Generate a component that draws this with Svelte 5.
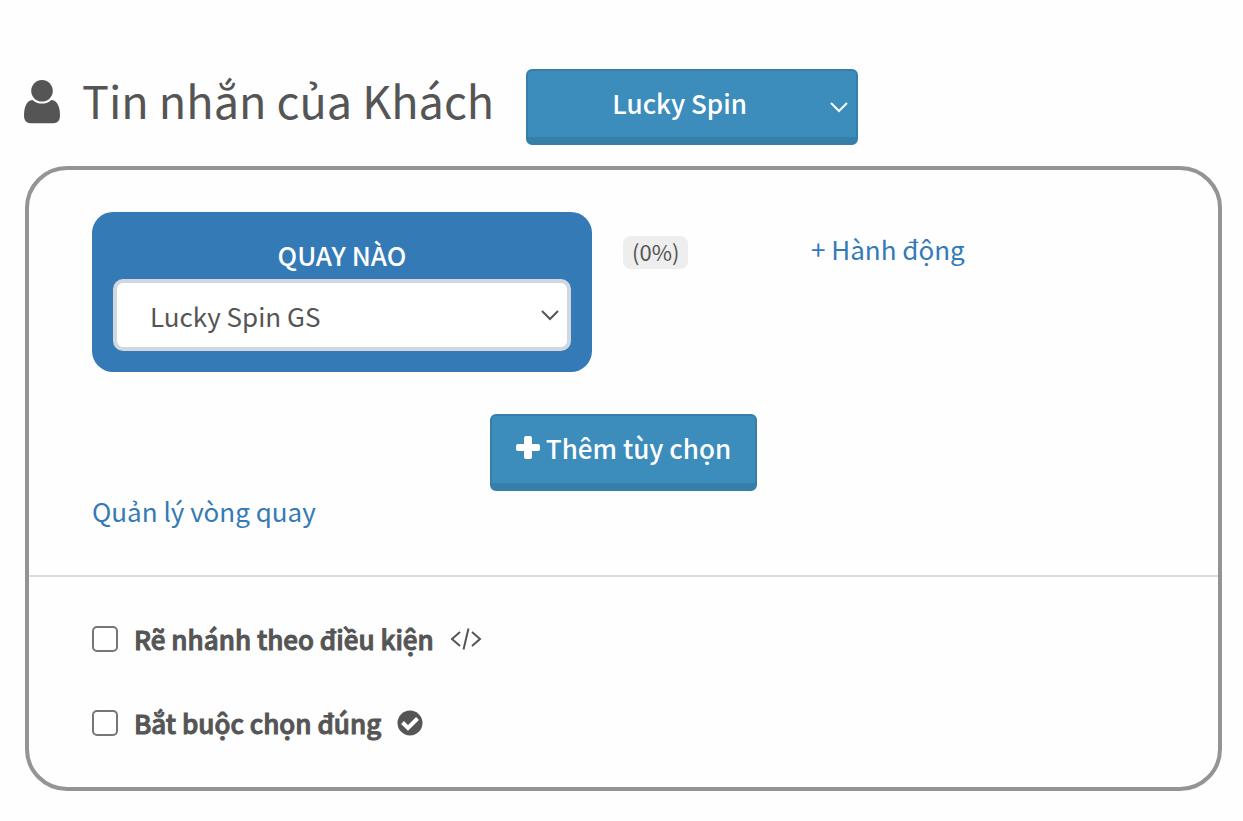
<script>
  let messageType = $state('Lucky Spin');
  let spin = $state('Lucky Spin GS');
  let branch = $state(false);
  let required = $state(false);
</script>

<main>
  <header>
    <svg class="user" viewBox="0 0 36 44" aria-hidden="true">
      <path d="M8.500 20 C11 22.500 14.300 23.600 18 23.600 C21.700 23.600 25 22.500 27.500 20 C34.500 20.500 36 29.500 36 35.500 C36 40.500 33.500 43.200 29.500 43.200 H6.500 C2.500 43.200 0 40.500 0 35.500 C0 29.500 1.500 20.500 8.500 20Z" />
      <circle cx="18" cy="10.800" r="10.800" />
    </svg>
    <h1>Tin nhắn của Khách</h1>
    <div class="picker type">
      <select aria-label="Tin nhắn của Khách" bind:value={messageType}>
        <option>Lucky Spin</option>
      </select>
      <svg class="chevron" viewBox="0 0 18 12" aria-hidden="true"><path d="M1 2 L9 10 L17 2" /></svg>
    </div>
  </header>

  <section class="card">
    <div class="content">
      <div class="option">
        <div class="question">
          <label for="spin">QUAY NÀO</label>
          <div class="picker spin">
            <select id="spin" bind:value={spin}>
              <option>Lucky Spin GS</option>
            </select>
            <svg class="chevron" viewBox="0 0 18 12" aria-hidden="true"><path d="M1 2 L9 10 L17 2" /></svg>
          </div>
        </div>
        <div class="rate"><span>(0%)</span></div>
        <a href="#action">+ Hành động</a>
      </div>
      <button type="button">
        <svg class="plus" viewBox="0 0 24 24" aria-hidden="true">
          <path d="M10 0h4q2 0 2 2v6h6q2 0 2 2v3q0 2-2 2h-6v6q0 2-2 2h-4q-2 0-2-2v-6H2q-2 0-2-2v-3q0-2 2-2h6V2q0-2 2-2z" />
        </svg>
        Thêm tùy chọn
      </button>
      <a class="manage" href="#manage">Quản lý vòng quay</a>
    </div>
    <div class="settings">
      <label class="check">
        <input type="checkbox" bind:checked={branch} />
        <span>Rẽ nhánh theo điều kiện</span>
        <svg class="code" viewBox="0 0 32 24" aria-hidden="true">
          <path d="M10 5 L2 12 L10 19 M18.500 1.500 L13.500 22.500 M22 5 L30 12 L22 19" />
        </svg>
      </label>
      <label class="check">
        <input type="checkbox" bind:checked={required} />
        <span>Bắt buộc chọn đúng</span>
        <svg class="done" viewBox="0 0 26 26" aria-hidden="true">
          <circle cx="13" cy="13" r="12.500" />
          <path d="M5.500 12.500 L11 18 L20.500 8.500" />
        </svg>
      </label>
    </div>
  </section>
</main>

<style>
  :global(body) {
    background: #fefefe;
  }
  main {
    box-sizing: border-box;
    padding: 69px 21px 30px 25px;
    color: #555;
    font: 400 26px/40px "Noto Sans CJK JP", "Noto Sans", sans-serif;
  }
  select, button {
    font: inherit;
    color: inherit;
  }
  a {
    color: #337ab7;
    text-decoration: none;
  }
  header {
    display: flex;
    align-items: center;
    margin-bottom: 21px;
  }
  .user {
    width: 36px;
    height: 44px;
    margin-right: 22px;
    margin-left: -1px;
    margin-bottom: 11px;
    fill: #555;
  }
  h1 {
    margin: 0 32px 14px 0;
    font-size: 45px;
    font-weight: 400;
    line-height: 62px;
  }
  .picker {
    display: grid;
    align-items: center;
  }
  .picker > * {
    grid-area: 1 / 1;
  }
  .picker select {
    appearance: none;
    box-sizing: border-box;
    width: 100%;
    outline: none;
  }
  .chevron {
    width: 18px;
    height: 12px;
    justify-self: end;
    margin-right: 12px;
    fill: none;
    stroke: #555;
    stroke-width: 2;
    pointer-events: none;
  }
  .type {
    width: 332px;
  }
  .type .chevron {
    stroke: #fff;
    margin-right: 10px;
  }
  .type select, button {
    height: 76px;
    border: 2px solid #367fa9;
    border-bottom-width: 8px;
    border-radius: 6px;
    background: #3c8dbc;
    color: #fff;
    font-weight: 500;
  }
  .type select {
    padding: 0 25px 2px 0;
    text-align: center;
    text-align-last: center;
  }
  .card {
    border: 4px solid #949494;
    border-radius: 42px;
  }
  .content {
    display: flex;
    flex-direction: column;
    padding: 42px 63px;
    border-bottom: 2px solid #ddd;
  }
  .option {
    display: flex;
    align-items: flex-start;
    margin-bottom: 42px;
  }
  .question {
    box-sizing: border-box;
    width: 500px;
    padding: 23px 21px 21px;
    border-radius: 21px;
    background: #337ab7;
  }
  .question label {
    display: block;
    color: #fff;
    font-weight: 500;
    text-align: center;
    margin-bottom: 4px;
  }
  .spin select {
    height: 72px;
    padding: 2px 40px 0 33px;
    border: 4px solid #d2d6de;
    border-radius: 10px;
    background: #fff;
  }
  .rate {
    display: flex;
    box-sizing: border-box;
    width: 219px;
    padding: 24px 0 0 31px;
  }
  .rate span {
    padding: 0 9px 2px;
    border-radius: 8px;
    background: #eee;
    font-size: 22px;
    line-height: 31px;
  }
  .option > a {
    padding-top: 17px;
  }
  button {
    display: flex;
    align-items: center;
    align-self: center;
    gap: 6px;
    height: 77px;
    padding: 0 24px 3px;
  }
  .plus {
    width: 24px;
    height: 24px;
    fill: #fff;
  }
  .manage {
    align-self: flex-start;
    padding-bottom: 2px;
  }
  .settings {
    display: flex;
    flex-direction: column;
    align-items: flex-start;
    gap: 44px;
    padding: 42px 63px 44px;
  }
  .check {
    display: flex;
    align-items: center;
  }
  .check span {
    font-weight: 500;
    -webkit-text-stroke: 1px #555;
  }
  input {
    appearance: none;
    box-sizing: border-box;
    width: 26px;
    height: 26px;
    margin: 0 16px 0 0;
    border: 2px solid #767676;
    border-radius: 5px;
    background: #fff;
  }
  input:checked {
    background: #337ab7;
  }
  .code, .done {
    height: 24px;
    width: 32px;
    margin-left: 16px;
    fill: none;
    stroke: #555;
    stroke-width: 2;
  }
  .done {
    width: 26px;
    height: 26px;
    stroke: none;
  }
  .done circle {
    fill: #555;
  }
  .done path {
    stroke: #fff;
    stroke-width: 4;
  }
</style>
